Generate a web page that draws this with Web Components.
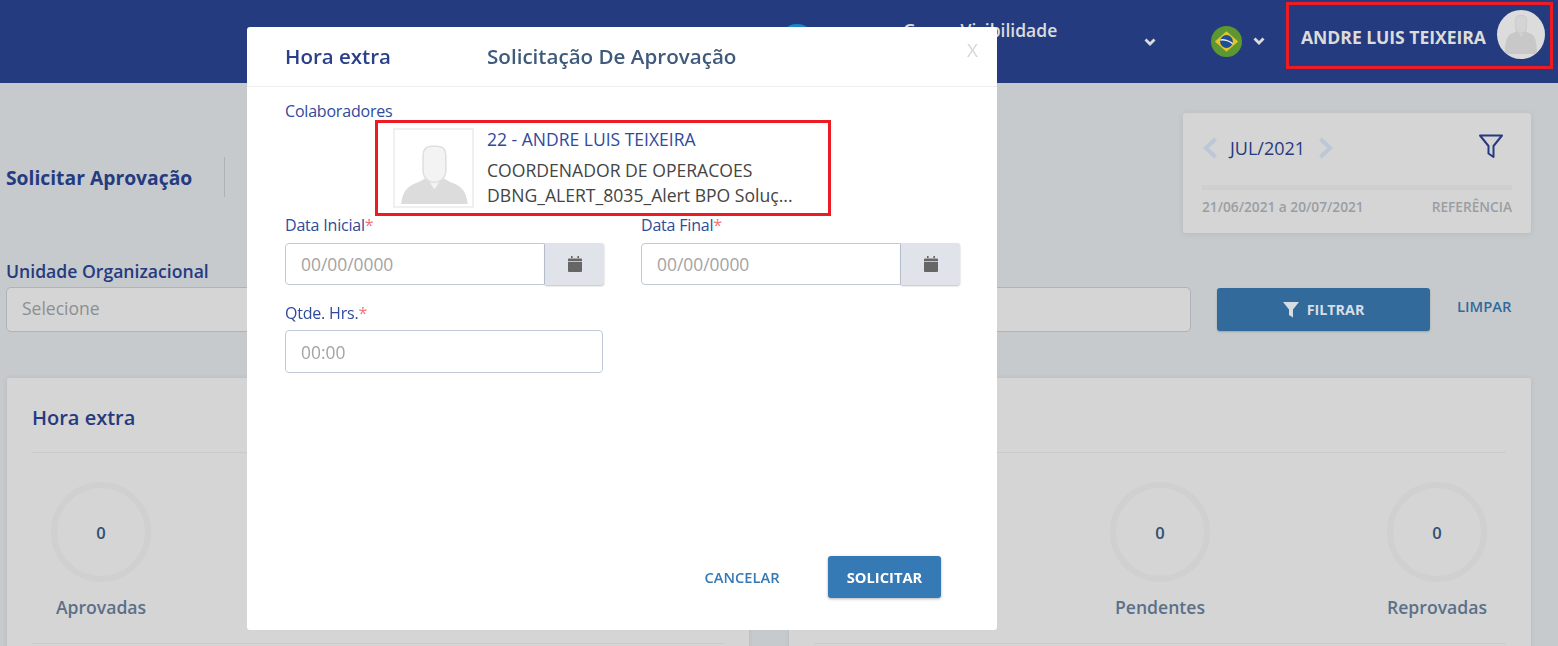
<!DOCTYPE html>
<html lang="pt-BR">
<head>
<meta charset="utf-8">
<title>Solicitar Aprovação</title>
<style>
  html, body { margin: 0; height: 646px; overflow: hidden; }
  body { background: #c6cacd; font-family: "Open Sans", "Noto Sans", sans-serif; font-size: 16px; color: #253b80; }
</style>
</head>
<body>
<app-header></app-header>
<app-toolbar></app-toolbar>
<app-filter></app-filter>
<div style="display:flex;gap:40px;padding:46px 27px 0 7px">
  <stat-card title-text="Hora extra" style="flex:1">
    <stat-ring value="0" label="Aprovadas"></stat-ring>
  </stat-card>
  <stat-card style="flex:1" align="end">
    <stat-ring value="0" label="Pendentes"></stat-ring>
    <stat-ring value="0" label="Reprovadas"></stat-ring>
  </stat-card>
</div>
<approval-modal></approval-modal>

<script>
(function(){
  // same silhouette for both photos, the header one sits further back in its circle
  function avatar(vb, bottom, c) {
    return `<svg viewBox="${vb}" width="100%" height="100%" style="display:block">
      <path d="M6 ${bottom}C7 64 14 58 24 55L33 50L41 62L49 50L58 55C68 58 75 64 76 ${bottom}Z" fill="${c[2]}"/>
      <path d="M33 50L41 62L49 50L47 46H35Z" fill="${c[0]}"/>
      <path d="M29 27C29 20 33 17 38 17H44C49 17 53 20 53 27V42C53 50 48 55 41 55C34 55 29 50 29 42Z" fill="${c[0]}" stroke="${c[1]}" stroke-width="1.6"/>
    </svg>`;
  }

  class AppHeader extends HTMLElement {
    constructor() {
      super();
      this.attachShadow({mode:'open'});
      this.shadowRoot.innerHTML = `
        <style>
          :host { display: flex; height: 83px; background: #253b80; align-items: flex-start; color: #dcdcdc; position: relative; }
          .logo { margin: 24px 0 0 779px; width: 36px; height: 36px; border-radius: 50%; background: #1b87c9; flex: none; }
          .company { margin: 19px 0 0 88px; width: 240px; font-size: 17.5px; line-height: 22px; font-weight: 600; flex: none; }
          .chev { flex: none; }
          .flag { margin: 26px 0 0 54px; width: 31px; height: 31px; flex: none; }
          .user { margin: 2px 0 0 20px; width: 261px; height: 61px; border: 3px solid #ed1c24; display: flex; align-items: center; flex: none; }
          .name { margin: 3px 0 0 12px; font-size: 17.6px; font-weight: 700; white-space: nowrap; flex: 1; letter-spacing: -.05px; }
          .pic { width: 48px; height: 49px; border-radius: 50%; background: #dcdcdc; overflow: hidden; margin: -2px 5px 0 0; flex: none; }
        </style>
        <div class="logo"></div>
        <div class="company">Grupo Visibilidade</div>
        <svg class="chev" style="margin:37px 0 0 0" width="14" height="10" viewBox="0 0 14 10"><path d="M2.5 2.5L7 7l4.5-4.5" fill="none" stroke="#dcdcdc" stroke-width="2.8"/></svg>
        <svg class="flag" viewBox="0 0 32 32">
          <circle cx="16" cy="16" r="16" fill="#5d9732"/>
          <path d="M16 5.5L28 16L16 26.5L4 16Z" fill="#e6c52a"/>
          <circle cx="16" cy="16" r="6.6" fill="#1d4f96"/>
          <path d="M9.6 14.5C13 13.6 19 15 22.4 18.2" fill="none" stroke="#eee" stroke-width="1.4"/>
        </svg>
        <svg class="chev" style="margin:36px 0 0 10px" width="14" height="10" viewBox="0 0 14 10"><path d="M2.5 2.5L7 7l4.5-4.5" fill="none" stroke="#dcdcdc" stroke-width="2.8"/></svg>
        <div class="user">
          <span class="name">ANDRE LUIS TEIXEIRA</span>
          <div class="pic">${avatar('-11 6 104 104', 100, ['#d4d4d4','#c6c6c6','#c8c8c8'])}</div>
        </div>`;
    }
  }

  class AppToolbar extends HTMLElement {
    constructor() {
      super();
      this.attachShadow({mode:'open'});
      this.shadowRoot.innerHTML = `
        <style>
          :host { display: flex; height: 150px; padding: 30px 27px 0 6px; box-sizing: border-box; justify-content: space-between; }
          h1 { margin: 0; font-size: 19.3px; font-weight: 700; color: #253b80; width: 218px; white-space: nowrap; }
          .sep { width: 1px; height: 40px; background: #aeb3ba; }
          .left { display:flex; align-items:center; height: 40px; margin-top: 44px; }
          .period { width: 348px; height: 120px; box-sizing: border-box; background: #d5d5d5; border-radius: 3px; box-shadow: 0 1px 6px rgba(0,0,0,.08); padding: 17px 19px 0; }
          .row { display: flex; align-items: center; height: 36px; }
          .month { font-size: 18px; color: #253b80; margin: 0 13px 0 12px; }
          .grow { flex: 1; }
          .bar { height: 5px; background: #cfcfcf; margin-top: 19px; }
          .foot { display: flex; justify-content: space-between; font-size: 13.7px; font-weight: 600; color: #9a9ea3; margin-top: 8px; line-height: 18px; }
        </style>
        <div class="left"><h1>Solicitar Aprovação</h1><div class="sep"></div></div>
        <div class="period">
          <div class="row">
            <svg width="16" height="24" viewBox="0 0 16 24"><path d="M13.5 3L4 12l9.5 9" fill="none" stroke="#bcc8d8" stroke-width="4"/></svg>
            <span class="month">JUL/2021</span>
            <svg width="16" height="24" viewBox="0 0 16 24"><path d="M2.5 3L12 12l-9.5 9" fill="none" stroke="#bcc8d8" stroke-width="4"/></svg>
            <span class="grow"></span>
            <svg style="margin:-4px 8px 0 0" width="26" height="26" viewBox="0 0 26 26"><path d="M2 2.5H24L15.5 13V24L10.5 20.5V13Z" fill="none" stroke="#253b80" stroke-width="2" stroke-linejoin="round"/></svg>
          </div>
          <div class="bar"></div>
          <div class="foot"><span>21/06/2021 a 20/07/2021</span><span>REFERÊNCIA</span></div>
        </div>`;
    }
  }

  class AppFilter extends HTMLElement {
    constructor() {
      super();
      this.attachShadow({mode:'open'});
      this.shadowRoot.innerHTML = `
        <style>
          :host { display: flex; padding: 0 46px 0 6px; align-items: flex-end; height: 99px; box-sizing: border-box; }
          .field { width: 1185px; flex: none; }
          label { display: block; font-size: 17.6px; color: #253b80; line-height: 22px; margin-bottom: 5px; font-weight: 600; }
          .sel { height: 45px; box-sizing: border-box; border: 1px solid #aeb3ba; border-radius: 5px; background: #d5d5d5; padding: 0 15px; line-height: 41px; color: #8b8f93; font-size: 17.5px; }
          button { width: 213px; height: 43px; margin: 0 0 1px 26px; background: #326a9c; color: #d7dde3; border: 0; border-radius: 3px; font: 700 14.3px "Open Sans", sans-serif; display: flex; align-items: center; justify-content: center; gap: 8px; box-shadow: 0 1px 2px rgba(0,0,0,.2); flex: none; }
          .clear { flex: none; margin: 0 0 16px 27px; color: #326a9c; font-size: 14.8px; font-weight: 600; }
        </style>
        <div class="field"><label>Unidade Organizacional</label><div class="sel">Selecione</div></div>
        <button><svg width="16" height="17" viewBox="0 0 16 17"><path d="M0 1H16L10 8.5V16.5L6 14V8.5Z" fill="#d7dde3"/></svg>FILTRAR</button>
        <span class="clear">LIMPAR</span>`;
    }
  }

  class StatCard extends HTMLElement {
    constructor() {
      super();
      this.attachShadow({mode:'open'});
      this.shadowRoot.innerHTML = `
        <style>
          :host { display: block; height: 300px; background: #d5d5d5; border-radius: 2px; padding: 0 25px; box-sizing: border-box; box-shadow: 0 0 5px rgba(0,0,0,.08); }
          .head { height: 74px; border-bottom: 1px solid #cacaca; }
          h2 { margin: 0; padding-top: 26px; font-size: 20px; line-height: 28px; font-weight: 600; color: #253b80; min-height: 28px; }
          .stats { display: flex; padding: 29px 19px 0; box-sizing: border-box; border-bottom: 1px solid #cacaca; height: 191px; }
          :host([align="end"]) .stats { justify-content: flex-end; gap: 177px; }
        </style>
        <div class="head"><h2 id="t"></h2></div>
        <div class="stats"><slot></slot></div>`;
    }
    connectedCallback() {
      this.shadowRoot.querySelector('#t').textContent = this.getAttribute('title-text') || '';
    }
  }

  class StatRing extends HTMLElement {
    constructor() {
      super();
      this.attachShadow({mode:'open'});
      this.shadowRoot.innerHTML = `
        <style>
          :host { display: flex; flex-direction: column; align-items: center; width: 100px; }
          .ring { width: 100px; height: 100px; border: 6px solid #d0d0d0; border-radius: 50%; box-sizing: border-box; display: flex; align-items: center; justify-content: center; font-size: 16.5px; font-weight: 600; color: #2f4f70; flex: none; }
          .lbl { margin-top: 13px; font-size: 17.6px; font-weight: 600; line-height: 24px; color: #5b7088; white-space: nowrap; }
        </style>
        <div class="ring"></div><div class="lbl"></div>`;
    }
    connectedCallback() {
      this.shadowRoot.querySelector('.ring').textContent = this.getAttribute('value');
      this.shadowRoot.querySelector('.lbl').textContent = this.getAttribute('label');
    }
  }

  class DateField extends HTMLElement {
    constructor() {
      super();
      this.attachShadow({mode:'open'});
      this.shadowRoot.innerHTML = `
        <style>
          :host { display: block; width: 319px; }
          :host([plain]) { width: 318px; }
          label { display: block; font-size: 16px; line-height: 22px; color: #2f4a9b; margin-bottom: 7px; letter-spacing: -.2px; }
          :host([plain]) label { margin-bottom: 6px; }
          i { font-style: normal; color: #f0727a; }
          .box { display: flex; height: 42px; }
          .in { flex: 1; box-sizing: border-box; border: 1px solid #c2cad8; border-radius: 4px 0 0 4px; padding: 0 15px; line-height: 41px; font-size: 17.4px; color: #a3a3a3; }
          :host([plain]) .in { border-radius: 4px; height: 43px; line-height: 43px; }
          .btn { width: 59px; background: #e0e4ea; border-radius: 0 3px 3px 0; box-shadow: 0 1px 2px rgba(0,0,0,.25); display: flex; align-items: center; justify-content: center; }
        </style>
        <label><span id="l"></span><i>*</i></label>
        <div class="box"><div class="in" id="v"></div><div class="btn" id="b">
          <svg width="14" height="16" viewBox="0 0 14 16"><path d="M3 0h1.6v2H3zM9.4 0H11v2H9.4zM1 2.6h12a1 1 0 0 1 1 1V5H0V3.6a1 1 0 0 1 1-1zM0 5.8h14V15a1 1 0 0 1-1 1H1a1 1 0 0 1-1-1z" fill="#666"/></svg>
        </div></div>`;
    }
    connectedCallback() {
      this.shadowRoot.querySelector('#l').textContent = this.getAttribute('label');
      this.shadowRoot.querySelector('#v').textContent = this.getAttribute('placeholder');
      if (this.hasAttribute('plain')) this.shadowRoot.querySelector('#b').remove();
    }
  }

  class ApprovalModal extends HTMLElement {
    constructor() {
      super();
      this.attachShadow({mode:'open'});
      this.shadowRoot.innerHTML = `
        <style>
          :host { display: flex; flex-direction: column; position: fixed; left: 247px; top: 27px; width: 750px; height: 603px; background: #fff; border-radius: 3px; box-sizing: border-box; }
          .top { height: 57px; padding: 0 0 2px 38px; border-bottom: 1px solid #eee; display: flex; align-items: center; flex: none; position: relative; }
          .top h3 { margin: 0; font-size: 20.5px; font-weight: 600; color: #2a4189; width: 202px; }
          .top h4 { margin: 0; font-size: 20.6px; font-weight: 600; color: #3f5a7a; }
          .x { position: absolute; right: 19px; top: 15px; font-size: 19px; color: #d6d6d6; line-height: 16px; }
          .body { padding: 13px 36px 0 38px; flex: 1; }
          .lab { font-size: 16px; line-height: 22px; color: #2f4a9b; letter-spacing: -.2px; }
          .emp { margin: -2px 0 0 90px; width: 450px; height: 90px; border: 3px solid #ed1c24; display: flex; color: #444; }
          .photo { width: 81px; height: 80px; border: 2px solid #f0f0f0; box-sizing: border-box; margin: 5px 0 0 15px; flex: none; }
          .info { margin: 4px 0 0 13px; font-size: 17.6px; white-space: nowrap; }
          .nm { color: #2f4a9b; line-height: 24px; margin-bottom: 7px; font-size: 17.5px; }
          .ln { line-height: 25px; }
          .row { display: flex; gap: 37px; margin-top: -2px; }
          .row2 { margin-top: 17px; }
          .foot { flex: none; height: 74px; display: flex; padding-left: 433px; align-items: flex-start; }
          .cancel { width: 124px; text-align: center; margin-right: 24px; line-height: 42px; font-size: 14.7px; font-weight: 600; color: #3579b5; }
          .go { width: 113px; height: 42px; background: #3579b5; color: #fff; border-radius: 3px; line-height: 42px; text-align: center; font-size: 14.7px; font-weight: 700; box-shadow: 0 1px 3px rgba(0,0,0,.3); }
        </style>
        <div class="top"><h3>Hora extra</h3><h4>Solicitação De Aprovação</h4><span class="x">X</span></div>
        <div class="body">
          <div class="lab">Colaboradores</div>
          <div class="emp">
            <div class="photo">${avatar('0 0 80 80', 78, ['#f3f3f3','#dfdfdf','#dcdcdc'])}</div>
            <div class="info">
              <div class="nm">22 - ANDRE LUIS TEIXEIRA</div>
              <div class="ln">COORDENADOR DE OPERACOES</div>
              <div class="ln">DBNG_ALERT_8035_Alert BPO Soluç...</div>
            </div>
          </div>
          <div class="row">
            <date-field label="Data Inicial" placeholder="00/00/0000"></date-field>
            <date-field label="Data Final" placeholder="00/00/0000"></date-field>
          </div>
          <div class="row2"><date-field label="Qtde. Hrs." placeholder="00:00" plain></date-field></div>
        </div>
        <div class="foot"><span class="cancel">CANCELAR</span><span class="go">SOLICITAR</span></div>`;
    }
  }

  customElements.define('app-header', AppHeader);
  customElements.define('app-toolbar', AppToolbar);
  customElements.define('app-filter', AppFilter);
  customElements.define('stat-card', StatCard);
  customElements.define('stat-ring', StatRing);
  customElements.define('date-field', DateField);
  customElements.define('approval-modal', ApprovalModal);
})();
</script>
</body>
</html>
